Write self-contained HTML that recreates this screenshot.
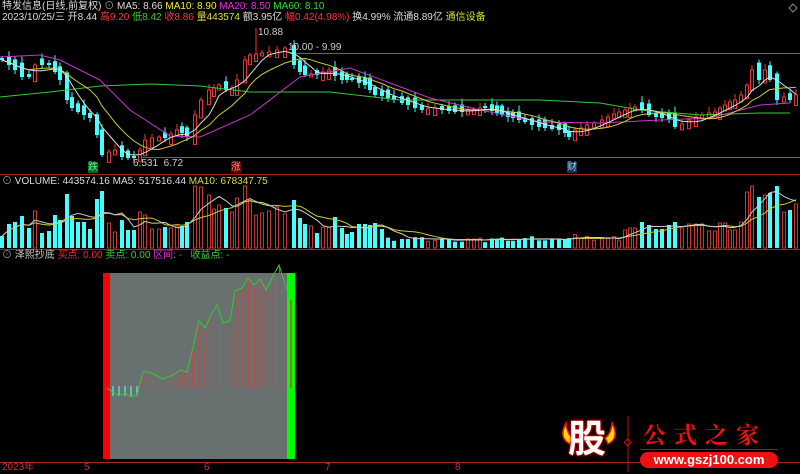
<!DOCTYPE html><html><head><meta charset="utf-8"><style>
body{margin:0;background:#000;width:800px;height:474px;overflow:hidden;font-family:"Liberation Sans","Noto Sans CJK SC",sans-serif;}
.t{position:absolute;font-size:10px;white-space:nowrap;line-height:12px}
</style></head><body>
<svg id="s" width="800" height="474" style="position:absolute;left:0;top:0" xmlns="http://www.w3.org/2000/svg"></svg>
<div class="t" style="left:2px;top:1px;color:#ddd">特发信息(日线,前复权) <span style="color:#999">⊙</span> MA5: 8.66 <span style="color:#ee4">MA10: 8.90</span> <span style="color:#d3d">MA20: 8.50</span> <span style="color:#3d3">MA60: 8.10</span></div>
<div class="t" style="left:2px;top:12px;color:#ddd">2023/10/25/三 开8.44 <span style="color:#f33">高9.20</span> <span style="color:#3c3">低8.42</span> <span style="color:#f33">收8.86</span> <span style="color:#dd3">量443574</span> 额3.95亿 <span style="color:#f33">幅0.42(4.98%)</span> 换4.99% 流通8.89亿 <span style="color:#dd3">通信设备</span></div>
<div class="t" style="left:258px;top:27px;color:#ccc">10.88</div>
<div class="t" style="left:288px;top:42px;color:#ccc">10.00 - 9.99</div>
<div class="t" style="left:133px;top:158px;color:#ccc;font-size:10px">6.531 &nbsp;6.72</div>
<div class="t" style="left:88px;top:162px;background:#063;color:#6e6;font-size:10px;line-height:11px">跌</div>
<div class="t" style="left:231px;top:162px;background:#600;color:#f88;font-size:10px;line-height:11px">涨</div>
<div class="t" style="left:567px;top:162px;background:#134;color:#9cf;font-size:10px;line-height:11px">财</div>
<div class="t" style="left:2px;top:176px;color:#ddd"><span style="color:#999">⊙</span> VOLUME: 443574.16 MA5: 517516.44 <span style="color:#dd3">MA10: 678347.75</span></div>
<div class="t" style="left:2px;top:250px;color:#ccc"><span style="color:#999">⊙</span> 泽熙抄底 <span style="color:#f22">买点: 0.00</span> <span style="color:#3c3">卖点: 0.00</span> <span style="color:#d3d">区间: -</span> &nbsp; <span style="color:#3c3">收益点: -</span></div>
<div class="t" style="left:2px;top:462px;color:#c33">2023年</div>
<div class="t" style="left:84px;top:462px;color:#c33">5</div>
<div class="t" style="left:204px;top:462px;color:#c33">6</div>
<div class="t" style="left:325px;top:462px;color:#c33">7</div>
<div class="t" style="left:455px;top:462px;color:#c33">8</div>
<div class="t" style="left:568px;top:418px;font-size:38px;line-height:44px;font-weight:bold;color:#fff;text-shadow:0 0 3px #f00,0 0 2px #f00">股</div>
<div class="t" style="left:643px;top:421px;font-size:23px;line-height:26px;font-weight:bold;color:#e11;letter-spacing:8px;font-family:'Noto Serif CJK SC',serif">公式之家</div>
<div class="t" style="left:640px;top:452px;width:138px;height:16px;border-radius:8px;background:#e11;color:#fff;font-weight:bold;font-size:13px;line-height:16px;text-align:center">www.gszj100.com</div>
<script>
const S=document.getElementById('s');let h='';
function L(x1,y1,x2,y2,c,w){h+=`<line x1="${x1}" y1="${y1}" x2="${x2}" y2="${y2}" stroke="${c}" stroke-width="${w||1}"/>`}
function R(x,y,w,hh,f,st){h+=`<rect x="${x}" y="${y}" width="${w}" height="${hh}" fill="${f}" ${st?`stroke="${st}"`:''}/>`}
function interp(p,x){for(let i=0;i<p.length-1;i++){if(x>=p[i][0]&&x<=p[i+1][0]){let t=(x-p[i][0])/(p[i+1][0]-p[i][0]);return p[i][1]+t*(p[i+1][1]-p[i][1])}}return x<p[0][0]?p[0][1]:p[p.length-1][1]}
function PL(p,c){h+=`<polyline fill="none" stroke="${c}" stroke-width="1" points="${p.map(a=>a.join(',')).join(' ')}"/>`}
L(0,174.5,800,174.5,'#a22');L(0,249.5,800,249.5,'#a22');L(0,462.5,800,462.5,'#a22');
L(290,53.5,800,53.5,'#666');L(140,157.5,800,157.5,'#666');
const C=[[0,60],[7,65],[13,70],[20,77],[27,77],[33,65],[40,65],[47,65],[53,72],[58,80],[65,100],[70,108],[76,112],[82,115],[88,118],[95,135],[100,155],[107,152],[113,150],[120,157],[126,158],[132,158],[138,150],[143,140],[150,138],[157,137],[163,138],[169,134],[175,130],[180,133],[185,137],[193,115],[199,100],[207,90],[212,88],[217,85],[224,90],[230,88],[235,80],[243,60],[248,55],[254,54],[260,53],[267,52],[275,50],[283,48],[292,65],[298,72],[303,75],[309,74],[315,75],[321,72],[327,70],[333,76],[340,80],[345,80],[350,80],[357,83],[363,85],[368,90],[373,95],[380,96],[386,98],[392,100],[400,103],[406,105],[413,108],[420,110],[426,109],[433,108],[440,110],[447,111],[453,112],[460,112],[466,110],[472,109],[478,108],[483,108],[490,111],[495,113],[500,115],[506,117],[511,118],[517,120],[523,122],[530,125],[537,127],[543,128],[550,129],[557,130],[563,133],[567,137],[573,130],[579,128],[585,125],[592,123],[600,120],[606,117],[612,114],[617,112],[623,110],[628,108],[633,107],[640,110],[647,115],[654,117],[660,118],[667,120],[673,127],[680,124],[687,120],[694,117],[700,115],[707,113],[713,112],[718,108],[723,105],[728,102],[733,100],[739,95],[745,85],[750,70],[757,80],[763,70],[768,80],[775,100],[782,97],[788,100],[794,95]];
let prev=C[0][1],vols=[];
C.forEach((c,i)=>{let x=c[0],y=c[1],up=y<prev;let o=prev+(up?1:-1)*(2+((i*37)%7)*0.9);let top=Math.min(o,y),bot=Math.max(o,y);if(bot-top<2)bot=top+2;
let hi=top-2-((i*13)%5),lo=bot+2+((i*7)%4);
if(i==41){hi=28}
if(up){L(x+2,hi,x+2,bot,'#e33');R(x+0.5,top,3,bot-top,'#000','#e33')}else{L(x+2,hi,x+2,lo,'#4ff');R(x,top,4,bot-top,'#4ff')}
let v=Math.abs(y-prev)*2+12+((i*29)%9);if(x>190&&x<290)v+=18;if(x>740)v+=18;if(x>380&&x<620)v=v*0.45;v=Math.min(v,62);vols.push([x,v,up]);prev=y;});
vols.forEach(a=>{let[x,v,up]=a;if(up)R(x+0.5,248-v,3,v,'#000','#c33');else R(x,248-v,4,v,'#4ff')});
function ma(n){let r=[];for(let i=0;i<C.length;i++){let s=0,k=0;for(let j=Math.max(0,i-n+1);j<=i;j++){s+=C[j][1];k++}r.push([C[i][0]+2,s/k])}return r}
PL([[0,97],[50,92],[100,86],[150,84],[200,86],[250,92],[330,92],[400,100],[480,100],[540,100],[600,103],[640,110],[700,115],[760,113],[790,113]],'#3c3');
PL([[0,57],[40,55],[60,60],[100,80],[130,110],[170,136],[200,137],[250,115],[300,77],[350,68],[390,83],[430,98],[480,110],[540,122],[600,123],[660,120],[710,118],[760,105],[790,103]],'#c3c');
PL(ma(10),'#cc3');
PL(ma(5),'#ddd');
function vma(n){let r=[];for(let i=0;i<vols.length;i++){let s=0,k=0;for(let j=Math.max(0,i-n+1);j<=i;j++){s+=vols[j][1];k++}r.push([vols[i][0]+2,248-s/k])}return r}
PL(vma(10),'#cc3');PL(vma(5),'#ccc');
R(103,273,7,186,'#f00');R(110,273,178,186,'#687070');R(287,273,8,186,'#0f0');
const P=[[107,388],[113,392],[119,396],[125,393],[131,397],[137,395],[143,372],[149,372],[155,375],[163,379],[173,375],[180,370],[187,372],[193,347],[199,321],[205,328],[212,313],[217,305],[223,323],[230,321],[235,291],[242,288],[248,278],[254,285],[260,279],[266,290],[273,276],[279,265],[287,290]];
for(let x=113;x<=139;x+=6)L(x,386,x,396,'#6ff');
for(let x=143;x<=287;x+=6.2){L(x,interp(P,x),x,388,'#c44')}
L(291,300,291,388,'#c44',1.5);
PL(P,'#3c3');
h+=`<path d="M566 423 Q558 438 570 444 L573 438 Q567 434 566 423Z" fill="#fd0" stroke="#e11" stroke-width="1.5"/>`;
h+=`<path d="M612 423 Q620 438 608 444 L605 438 Q611 434 612 423Z" fill="#fd0" stroke="#e11" stroke-width="1.5"/>`;
L(628,416,628,472,'#c11');h+=`<rect x="625" y="440" width="5" height="5" transform="rotate(45 627.5 442.5)" fill="none" stroke="#c11"/>`;
L(640,449.5,778,449.5,'#a11');L(540,462.5,555,462.5,'#a22');
h+=`<path d="M789 8 l4 -4 l4 4 l-4 4z" fill="none" stroke="#888"/>`;
S.innerHTML=h;
</script>
</body></html>
